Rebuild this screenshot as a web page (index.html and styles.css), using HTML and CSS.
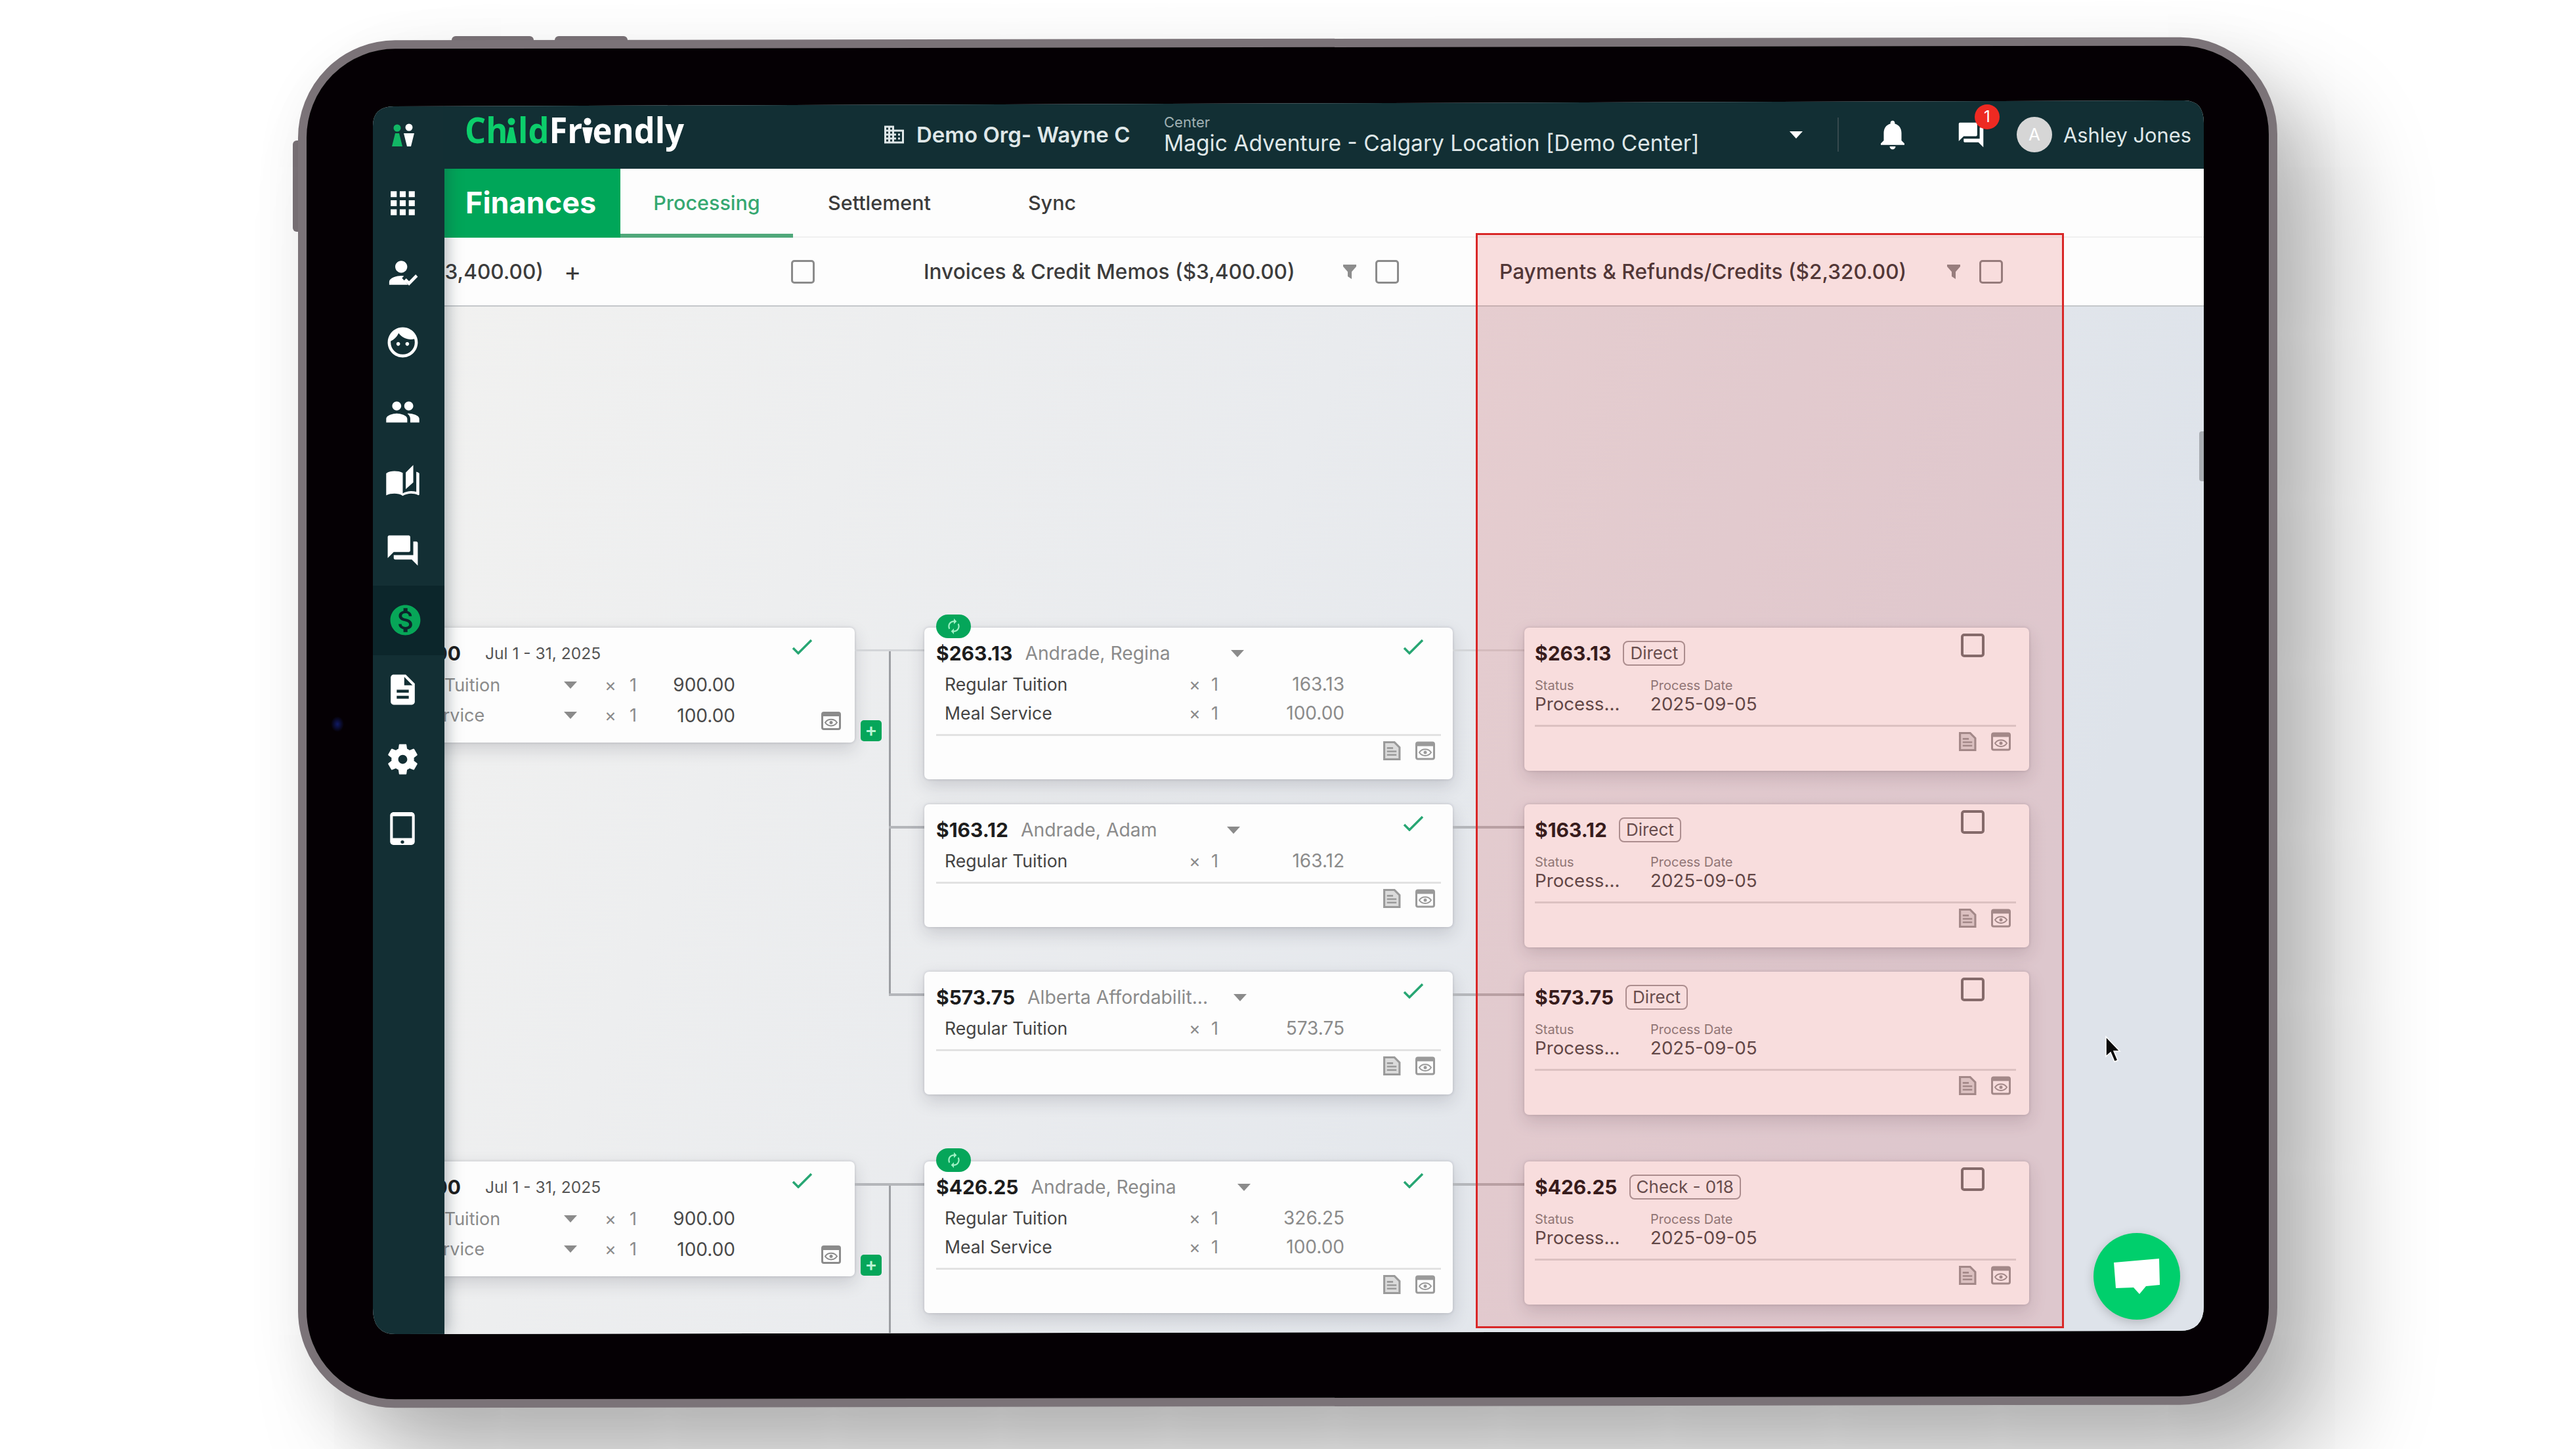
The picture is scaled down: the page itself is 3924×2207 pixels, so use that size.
FILE: index.html
```html
<!doctype html>
<html lang="en">
<head>
	<meta charset="utf-8">
	<title>ChildFriendly - Finances</title>
	<link rel="stylesheet" href="styles.css">
</head>
<body>

	<!--icons-->
	<svg class="sprite" width="0" height="0">
		<symbol id="i-apps" viewBox="0 0 24 24"><path d="M4 8h4V4H4v4zm6 12h4v-4h-4v4zm-6 0h4v-4H4v4zm0-6h4v-4H4v4zm6 0h4v-4h-4v4zm6-10v4h4V4h-4zm-6 4h4V4h-4v4zm6 6h4v-4h-4v4zm0 6h4v-4h-4v4z"/></symbol>
		<symbol id="i-reg" viewBox="0 0 24 24"><path d="M11 12c2.210 0 4-1.790 4-4s-1.790-4-4-4-4 1.790-4 4 1.790 4 4 4zM3 20v-2c0-2.670 5.300-4 8-4 .5 0 1.100.05 1.800.14L11.500 15.500 15.500 20zM16.200 20.500l-3.300-3.400 1.400-1.400 1.900 1.900 4.400-4.500 1.400 1.500z"/></symbol>
		<symbol id="i-face" viewBox="0 0 24 24"><path d="M9 11.750c-.69 0-1.250.56-1.250 1.250s.56 1.250 1.250 1.250 1.250-.56 1.250-1.250-.56-1.250-1.250-1.250zm6 0c-.69 0-1.250.56-1.250 1.250s.56 1.250 1.250 1.250 1.250-.56 1.250-1.250-.56-1.250-1.250-1.250zM12 2C6.480 2 2 6.480 2 12s4.480 10 10 10 10-4.480 10-10S17.520 2 12 2zm0 18c-4.410 0-8-3.590-8-8 0-.29.02-.58.05-.86 2.360-1.050 4.230-2.980 5.210-5.370C11.070 8.330 14.050 10 17.420 10c.78 0 1.530-.09 2.250-.26.21.71.33 1.470.33 2.260 0 4.410-3.590 8-8 8z"/></symbol>
		<symbol id="i-people" viewBox="0 0 24 24"><path d="M16 11c1.660 0 2.990-1.340 2.990-3S17.660 5 16 5c-1.660 0-3 1.340-3 3s1.340 3 3 3zm-8 0c1.660 0 2.990-1.340 2.990-3S9.660 5 8 5C6.340 5 5 6.340 5 8s1.340 3 3 3zm0 2c-2.330 0-7 1.170-7 3.500V19h14v-2.500c0-2.330-4.670-3.500-7-3.500zm8 0c-.29 0-.62.02-.97.05 1.160.84 1.970 1.970 1.970 3.450V19h6v-2.500c0-2.330-4.670-3.500-7-3.500z"/></symbol>
		<symbol id="i-book" viewBox="0 0 24 24"><path d="M19 1l-5 5v11l5-4.500V1zM12 6.200C10.500 5.300 8.300 5 6.500 5 4.600 5 2.500 5.400 1 6.500v14.700c1.500-.9 3.600-1.200 5.500-1.200s4 .4 5.500 1.500c1.400-.9 3.800-1.500 5.500-1.500 1.600 0 3.400.3 4.800 1 .3.100.7-.1.700-.5V6.500c-.6-.4-1.200-.8-2-1v13.300c-1.100-.3-2.300-.5-3.500-.5-1.700 0-4.100.6-5.500 1.500z"/></symbol>
		<symbol id="i-chat" viewBox="0 0 24 24"><path d="M21 6h-2v9H6v2c0 .55.45 1 1 1h11l4 4V7c0-.55-.45-1-1-1zm-4 6V3c0-.55-.45-1-1-1H3c-.55 0-1 .45-1 1v14l4-4h10c.55 0 1-.45 1-1z"/></symbol>
		<symbol id="i-money" viewBox="0 0 24 24"><path d="M12 2C6.480 2 2 6.480 2 12s4.480 10 10 10 10-4.480 10-10S17.520 2 12 2zm1.410 16.090V20h-2.670v-1.930c-1.710-.36-3.160-1.460-3.270-3.400h1.960c.1 1.050.82 1.870 2.650 1.870 1.960 0 2.400-.98 2.400-1.590 0-.83-.44-1.610-2.670-2.140-2.480-.6-4.180-1.620-4.180-3.670 0-1.720 1.390-2.840 3.110-3.210V4h2.670v1.950c1.860.45 2.790 1.860 2.850 3.390H14.300c-.05-1.110-.64-1.870-2.220-1.870-1.500 0-2.400.68-2.400 1.640 0 .84.65 1.390 2.670 1.910s4.180 1.390 4.180 3.910c-.01 1.830-1.380 2.830-3.120 3.160z"/></symbol>
		<symbol id="i-doc" viewBox="0 0 24 24"><path d="M14 2H6c-1.100 0-1.990.9-1.990 2L4 20c0 1.100.89 2 1.990 2H18c1.100 0 2-.9 2-2V8l-6-6zm2 16H8v-2h8v2zm0-4H8v-2h8v2zm-3-5V3.500L18.500 9H13z"/></symbol>
		<symbol id="i-gear" viewBox="0 0 24 24"><path d="M19.430 12.980c.04-.32.07-.64.07-.98s-.03-.66-.07-.98l2.110-1.650c.19-.15.24-.42.12-.64l-2-3.460c-.12-.22-.39-.3-.61-.22l-2.490 1c-.52-.4-1.080-.73-1.690-.98l-.38-2.650C14.460 2.180 14.250 2 14 2h-4c-.25 0-.46.18-.49.42l-.38 2.650c-.61.25-1.170.59-1.690.98l-2.490-1c-.23-.09-.49 0-.61.22l-2 3.460c-.13.22-.07.49.12.64l2.110 1.650c-.04.32-.07.65-.07.98s.03.66.07.98l-2.110 1.650c-.19.15-.24.42-.12.64l2 3.460c.12.22.39.3.61.22l2.490-1c.52.4 1.080.73 1.690.98l.38 2.650c.03.24.24.42.49.42h4c.25 0 .46-.18.49-.42l.38-2.650c.61-.25 1.170-.59 1.690-.98l2.490 1c.23.09.49 0 .61-.22l2-3.460c.12-.22.07-.49-.12-.64l-2.110-1.650zM12 15c-1.650 0-3-1.350-3-3s1.350-3 3-3 3 1.350 3 3-1.350 3-3 3z"/></symbol>
		<symbol id="i-tablet" viewBox="0 0 24 24"><path d="M18.500 0h-13C4.100 0 3 1.100 3 2.500v19C3 22.900 4.100 24 5.500 24h13c1.400 0 2.500-1.100 2.500-2.500v-19C21 1.100 19.900 0 18.500 0zM12 23c-.8 0-1.300-.5-1.300-1.200s.5-1.200 1.300-1.200 1.300.5 1.300 1.200S12.800 23 12 23zm7-4H5V3h14v16z"/></symbol>
		<symbol id="i-org" viewBox="0 0 24 24"><path d="M12 7V3H2v18h20V7H12zM6 19H4v-2h2v2zm0-4H4v-2h2v2zm0-4H4V9h2v2zm0-4H4V5h2v2zm4 12H8v-2h2v2zm0-4H8v-2h2v2zm0-4H8V9h2v2zm0-4H8V5h2v2zm10 12h-8v-2h2v-2h-2v-2h2v-2h-2V9h8v10zm-2-8h-2v2h2v-2zm0 4h-2v2h2v-2z"/></symbol>
		<symbol id="i-bell" viewBox="0 0 24 24"><path d="M12 22c1.100 0 2-.9 2-2h-4c0 1.100.9 2 2 2zm6-6v-5c0-3.070-1.640-5.640-4.500-6.320V4c0-.83-.67-1.500-1.500-1.500s-1.500.67-1.500 1.500v.68C7.630 5.360 6 7.920 6 11v5l-2 2v1h16v-1l-2-2z"/></symbol>
		<symbol id="i-filter" viewBox="0 0 20 22"><path d="M0 0h20v3l-7 8v11l-6-4v-7L0 3z"/></symbol>
		<symbol id="i-check" viewBox="0 0 32 24"><path d="M2 14l8 8L30 2" fill="none" stroke="#27a673" stroke-width="3.500"/></symbol>
		<symbol id="i-note" viewBox="0 0 28 28"><path d="M3 1.500h15l7.500 7.500v17.500H3z" fill="#0002" stroke="currentColor" stroke-width="3"/><path d="M7 10h9M7 15h14M7 20h14" stroke="currentColor" stroke-width="2.500"/></symbol>
		<symbol id="i-view" viewBox="0 0 30 28"><rect x="1.500" y="1.500" width="27" height="25" rx="2.500" fill="none" stroke="currentColor" stroke-width="3"/><path d="M2 4.500h26" stroke="currentColor" stroke-width="5"/><path d="M6 16.500c4-6.500 14-6.500 18 0-4 6.500-14 6.500-18 0z" fill="none" stroke="currentColor" stroke-width="2"/><circle cx="15" cy="16.500" r="2.500" fill="currentColor"/></symbol>
		<symbol id="i-sync" viewBox="0 0 24 24"><path d="M12 6v3l4-4-4-4v3c-4.420 0-8 3.580-8 8 0 1.570.46 3.030 1.240 4.260L6.700 14.800C6.250 13.970 6 13.010 6 12c0-3.310 2.690-6 6-6zm6.760 1.740L17.300 9.200c.44.84.7 1.790.7 2.800 0 3.310-2.690 6-6 6v-3l-4 4 4 4v-3c4.420 0 8-3.580 8-8 0-1.570-.46-3.030-1.240-4.260z"/></symbol>
	</svg>

	<!--tablet start-->
	<div class="tablet">
		<span class="key key-a"></span>
		<span class="key key-b"></span>
		<span class="key key-c"></span>
		<span class="case"></span>
		<span class="lens"></span>

		<div class="screen">
			<!--sidebar start-->
			<nav class="side">
				<div class="mark">
					<svg width="36" height="38" viewBox="0 0 36 38"><g fill="#12b765"><circle cx="9" cy="7" r="5.500"/><path d="M6 15h6l5 20H1z"/></g><g fill="#fff"><circle cx="27" cy="6" r="5.500"/><path d="M19 15h16l-5 20h-6z"/></g></svg>
				</div>
				<a class="item"><svg><use href="#i-apps"/></svg></a>
				<a class="item"><svg><use href="#i-reg"/></svg></a>
				<a class="item"><svg><use href="#i-face"/></svg></a>
				<a class="item"><svg><use href="#i-people"/></svg></a>
				<a class="item"><svg><use href="#i-book"/></svg></a>
				<a class="item"><svg><use href="#i-chat"/></svg></a>
				<a class="item on"><svg><use href="#i-money"/></svg></a>
				<a class="item"><svg><use href="#i-doc"/></svg></a>
				<a class="item"><svg><use href="#i-gear"/></svg></a>
				<a class="item"><svg><use href="#i-tablet"/></svg></a>
			</nav>
			<!--end sidebar-->

			<main class="main">
				<header class="top">
					<svg class="logo" width="340" height="70" viewBox="0 0 340 70">
						<text x="0" y="49" textLength="334" lengthAdjust="spacingAndGlyphs"><tspan fill="#0cce6b">Ch</tspan><tspan fill="none">i</tspan><tspan fill="#0cce6b">ld</tspan><tspan>Fr</tspan><tspan fill="none">i</tspan><tspan>endly</tspan></text>
						<g fill="#0cce6b"><circle cx="71" cy="16" r="5.500"/><path d="M68 25h6l5 24H63z"/></g>
						<g fill="#fff"><circle cx="187" cy="16" r="5.500"/><path d="M179 25h16l-5 24h-6z"/></g>
					</svg>
					<div class="org"><svg><use href="#i-org"/></svg><b>Demo Org- Wayne C</b></div>
					<div class="center">
						<div><small>Center</small><p>Magic Adventure - Calgary Location [Demo Center]</p></div>
						<i class="caret"></i>
					</div>
					<div class="tools">
						<svg class="bell"><use href="#i-bell"/></svg>
						<div class="msg"><svg><use href="#i-chat"/></svg><em>1</em></div>
						<span class="avatar">A</span>
						<span class="user">Ashley Jones</span>
					</div>
				</header>

				<div class="tabs">
					<h1>Finances</h1>
					<a class="tab on">Processing</a>
					<a class="tab">Settlement</a>
					<a class="tab">Sync</a>
				</div>

				<div class="heads">
					<div class="head h1c"><span class="cut">($3,400.00)</span><span class="add">+</span><i class="box"></i></div>
					<div class="head h2c"><span>Invoices &amp; Credit Memos ($3,400.00)</span><svg><use href="#i-filter"/></svg><i class="box"></i></div>
					<div class="head h3c"><span>Payments &amp; Refunds/Credits ($2,320.00)</span><svg><use href="#i-filter"/></svg><i class="box"></i></div>
				</div>

				<!--board start-->
				<div class="board">
					<!--row 1-->
					<div class="card charge">
						<div class="line"><b>$1,000.00</b><span class="date">Jul 1 - 31, 2025</span><svg class="tick"><use href="#i-check"/></svg></div>
						<div class="fee"><span>Regular Tuition</span><i class="caret"></i><s>×</s><u>1</u><em>900.00</em></div>
						<div class="fee"><span>Meal Service</span><i class="caret"></i><s>×</s><u>1</u><em>100.00</em></div>
						<svg class="view"><use href="#i-view"/></svg>
					</div>
					<div class="wire soft split"><span class="plus">+</span></div>
					<div class="card invoice">
						<span class="pill"><svg><use href="#i-sync"/></svg></span>
						<div class="line"><b>$263.13</b><span class="name">Andrade, Regina</span><i class="caret"></i><svg class="tick"><use href="#i-check"/></svg></div>
						<div class="fee"><span>Regular Tuition</span><s>×</s><u>1</u><em>163.13</em></div>
						<div class="fee"><span>Meal Service</span><s>×</s><u>1</u><em>100.00</em></div>
						<div class="foot"><svg><use href="#i-note"/></svg><svg><use href="#i-view"/></svg></div>
					</div>
					<div class="wire soft"></div>
					<div class="card pay">
						<div class="line"><b>$263.13</b><span class="chip">Direct</span><i class="box"></i></div>
						<dl><div><dt>Status</dt><dd>Process...</dd></div><div><dt>Process Date</dt><dd>2025-09-05</dd></div></dl>
						<div class="foot"><svg><use href="#i-note"/></svg><svg><use href="#i-view"/></svg></div>
					</div>

					<!--row 2-->
					<div class="wire branch split"></div>
					<div class="card invoice">
						<div class="line"><b>$163.12</b><span class="name">Andrade, Adam</span><i class="caret"></i><svg class="tick"><use href="#i-check"/></svg></div>
						<div class="fee"><span>Regular Tuition</span><s>×</s><u>1</u><em>163.12</em></div>
						<div class="foot"><svg><use href="#i-note"/></svg><svg><use href="#i-view"/></svg></div>
					</div>
					<div class="wire"></div>
					<div class="card pay">
						<div class="line"><b>$163.12</b><span class="chip">Direct</span><i class="box"></i></div>
						<dl><div><dt>Status</dt><dd>Process...</dd></div><div><dt>Process Date</dt><dd>2025-09-05</dd></div></dl>
						<div class="foot"><svg><use href="#i-note"/></svg><svg><use href="#i-view"/></svg></div>
					</div>

					<!--row 3-->
					<div class="wire branch"></div>
					<div class="card invoice">
						<div class="line"><b>$573.75</b><span class="name">Alberta Affordabilit...</span><i class="caret"></i><svg class="tick"><use href="#i-check"/></svg></div>
						<div class="fee"><span>Regular Tuition</span><s>×</s><u>1</u><em>573.75</em></div>
						<div class="foot"><svg><use href="#i-note"/></svg><svg><use href="#i-view"/></svg></div>
					</div>
					<div class="wire"></div>
					<div class="card pay">
						<div class="line"><b>$573.75</b><span class="chip">Direct</span><i class="box"></i></div>
						<dl><div><dt>Status</dt><dd>Process...</dd></div><div><dt>Process Date</dt><dd>2025-09-05</dd></div></dl>
						<div class="foot"><svg><use href="#i-note"/></svg><svg><use href="#i-view"/></svg></div>
					</div>

					<!--row 4-->
					<div class="card charge">
						<div class="line"><b>$1,000.00</b><span class="date">Jul 1 - 31, 2025</span><svg class="tick"><use href="#i-check"/></svg></div>
						<div class="fee"><span>Regular Tuition</span><i class="caret"></i><s>×</s><u>1</u><em>900.00</em></div>
						<div class="fee"><span>Meal Service</span><i class="caret"></i><s>×</s><u>1</u><em>100.00</em></div>
						<svg class="view"><use href="#i-view"/></svg>
					</div>
					<div class="wire split"><span class="plus">+</span></div>
					<div class="card invoice">
						<span class="pill"><svg><use href="#i-sync"/></svg></span>
						<div class="line"><b>$426.25</b><span class="name">Andrade, Regina</span><i class="caret"></i><svg class="tick"><use href="#i-check"/></svg></div>
						<div class="fee"><span>Regular Tuition</span><s>×</s><u>1</u><em>326.25</em></div>
						<div class="fee"><span>Meal Service</span><s>×</s><u>1</u><em>100.00</em></div>
						<div class="foot"><svg><use href="#i-note"/></svg><svg><use href="#i-view"/></svg></div>
					</div>
					<div class="wire"></div>
					<div class="card pay">
						<div class="line"><b>$426.25</b><span class="chip">Check - 018</span><i class="box"></i></div>
						<dl><div><dt>Status</dt><dd>Process...</dd></div><div><dt>Process Date</dt><dd>2025-09-05</dd></div></dl>
						<div class="foot"><svg><use href="#i-note"/></svg><svg><use href="#i-view"/></svg></div>
					</div>
				</div>
				<!--end board-->
			</main>

			<span class="thumb"></span>
			<svg class="cursor" width="26" height="42" viewBox="0 0 26 42"><path d="M2 2v30l7-6 6 14 5-2-6-14h9z" fill="#0a0a0a" stroke="#fff" stroke-width="1.500"/></svg>
			<button class="help"><svg width="72" height="56" viewBox="0 0 72 56"><path d="M1 7l69-6 1 40-21 2-10 12-9-10-27 1z" fill="#fff"/></svg></button>
			<div class="mark-area"></div>
		</div>
	</div>
	<!--end tablet-->

</body>
</html>
```
FILE: styles.css
```css
*{margin:0;padding:0;box-sizing:border-box;}
html,body{width:3924px;height:2207px;overflow:hidden;}
body{background:#fff;font-family:Inter,"Liberation Sans",sans-serif;color:#3c3c3c;padding:59px 0 0 454px;}
svg{display:block;fill:currentColor;flex:none;}
i,em{font-style:normal;}
s,u{text-decoration:none;}
.sprite{position:absolute;}

/*tablet start*/
.tablet{position:relative;width:3015px;height:2083px;padding:94px 0 0 114px;}
.case{position:absolute;inset:0;background:#050004;border:13px solid #7b7378;border-radius:148px;transform:skewY(-.1deg);box-shadow:90px 100px 150px rgba(0,0,0,.25),20px 30px 90px rgba(0,0,0,.1);}
.key{position:absolute;background:#7b7378;border-radius:6px;}
.key-a{left:234px;top:-4px;width:125px;height:20px;}
.key-b{left:391px;top:-4px;width:111px;height:20px;}
.key-c{left:-8px;top:155px;width:20px;height:139px;}
.lens{position:absolute;left:50px;top:1032px;width:20px;height:24px;border-radius:50%;background:radial-gradient(#101a66,#050004 70%);}
.screen{position:relative;width:2789px;height:1879px;display:flex;overflow:hidden;background:#e6e9ee;clip-path:path("M0 39Q0 9 32 9L2759 0Q2789 0 2789 34L2789 1836Q2789 1874 2752 1874L34 1879Q0 1879 0 1840Z");}

/*sidebar*/
.side{position:relative;z-index:3;width:109px;background:#132f34;color:#fff;box-shadow:4px 0 22px rgba(30,50,60,.35);}
.side .mark{height:104px;display:flex;align-items:center;padding:4px 0 0 28px;}
.side .item{height:105.8px;display:flex;align-items:center;justify-content:center;padding-right:19px;}
.side .item svg{width:55px;height:55px;}
.side .item:last-child svg{width:50px;height:54px;}
.side .on{background:#0c262b;color:#07a658;padding-right:11px;}

/*header*/
.main{width:2680px;display:flex;flex-direction:column;}
.top{position:relative;z-index:4;height:104px;background:#122f34;color:#dfe7e8;display:flex;align-items:center;margin-left:-2px;}
.logo{margin:-3px 0 0 33px;}
.logo text{font:700 54px "Open Sans",sans-serif;fill:#fff;}
.org{display:flex;align-items:center;margin-left:296px;width:429px;font-size:33px;white-space:nowrap;}
.org svg{width:36px;height:36px;margin-right:16px;}
.org b{font-weight:600;}
.center{display:flex;align-items:center;width:1028px;border-right:2px solid #35494d;height:52px;}
.center div{width:953px;white-space:nowrap;}
.center small{display:block;font-size:22px;line-height:26px;color:#9fb0b2;margin-top:-1px;}
.center p{font-size:33.5px;line-height:38px;}
.caret{display:block;width:0;height:0;border:10px solid transparent;border-top:11px solid currentColor;border-bottom:0;flex:none;}
.tools{display:flex;align-items:center;color:#fff;}
.bell{width:54px;height:54px;margin-left:55px;}
.msg{position:relative;margin-left:70px;}
.msg svg{width:45px;height:45px;}
.msg em{position:absolute;left:28px;top:-24px;width:38px;height:38px;border-radius:50%;background:#ee2a22;font-size:24px;line-height:38px;text-align:center;}
.avatar{width:54px;height:54px;border-radius:50%;background:#d6d6d6;margin-left:47px;font-size:26px;line-height:54px;text-align:center;}
.user{font-size:30.8px;margin-left:17px;color:#dfe7e8;white-space:nowrap;}

.tabs{height:105px;background:#fdfdfd;display:flex;border-bottom:2px solid #f0f0f0;}
.tabs h1{width:268px;height:105px;background:#00a659;color:#fff;font-size:45px;line-height:103px;font-weight:700;padding-left:32px;}
.tab{width:263px;height:105px;line-height:103px;text-align:center;font-size:30.5px;font-weight:500;}
.tab.on{color:#36a871;border-bottom:6px solid #4fa87a;}

.heads{position:relative;z-index:2;height:105px;background:#fdfdfd;border-bottom:2px solid #c4c7ca;display:flex;}
.head{display:flex;align-items:center;font-size:31.6px;font-weight:500;white-space:nowrap;}
.head svg{width:20px;height:22px;color:#8d8d8d;}
.head .box{margin-left:29px;}
.h1c{width:730px;}
.h1c .cut{width:151px;display:flex;justify-content:flex-end;}
.h1c .add{font-size:40px;margin-left:31px;width:25px;font-weight:400;}
.h1c .box{margin-left:321px;}
.h2c{width:877px;}
.h2c span{width:639px;}
.h3c span{width:682px;}
.box{display:block;width:36px;height:36px;border:3px solid #8b8b8b;border-radius:5px;}

/*board start*/
.board{flex:1;display:grid;grid-template-columns:625px 106px 805px 109px 769px;grid-template-rows:269px 255px 289px 263px;align-items:start;padding-top:489px;background:linear-gradient(112deg,#f1f1f0,#e9ebee 42%,#dee3ea 85%);overflow:hidden;}
.card{position:relative;background:#fdfdfd;border-radius:7px;box-shadow:0 10px 26px rgba(40,40,60,.17),0 0 4px rgba(40,40,60,.2);}
.line{height:64px;padding-top:14px;display:flex;align-items:center;white-space:nowrap;}
.line b{font-size:30px;font-weight:700;color:#1d1d1d;}
.fee{height:44px;display:flex;align-items:center;font-size:27px;white-space:nowrap;}
.fee span{font-size:26.6px;}
.fee em{font-size:28px;}
.fee s,.fee u{color:#8b8b8b;}
.fee s{width:32px;}
.caret{color:#8b8b8b;}
.top .caret{color:#fff;}
.tick{width:32px;height:24px;}

.charge{grid-column:1;height:175px;margin-left:-131px;padding-left:18px;}
.charge .line b{width:138px;display:flex;justify-content:flex-end;}
.charge .date{font-size:24.6px;margin-left:37px;width:467px;color:#555;}
.charge .tick{margin-top:-20px;}
.charge .fee{height:46.5px;padding-left:8px;color:#8b8b8b;}
.charge .fee span{width:287px;font-size:27px;}
.charge .fee s{margin-left:42px;width:38px;}
.charge .fee u{width:20px;}
.charge .fee em{width:141px;text-align:right;color:#4a4a4a;}
.view{position:absolute;right:21px;bottom:19px;width:30px;height:28px;color:#8b8b8b;}

.invoice{grid-column:3;padding:0 18px;}
.name{font-size:28.3px;color:#8b8b8b;width:314px;margin-left:19px;}
.invoice .tick{margin:-20px 26px 0 auto;}
.invoice .fee{padding-left:13px;}
.invoice .fee span{width:372px;color:#444;}
.invoice .fee s{width:34px;}
.invoice .fee u{width:20px;}
.invoice .fee em{width:183px;text-align:right;color:#8b8b8b;}
.foot{height:69px;margin-top:10px;border-top:3px solid #e2e2e2;display:flex;justify-content:flex-end;gap:21px;padding:8px 9px 0 0;color:#9a9a9a;}
.foot svg{width:30px;height:29px;}
.pill{position:absolute;left:18px;top:-20px;width:53px;height:36px;border-radius:18px;background:#05a65a;color:#9ff0c4;display:flex;align-items:center;justify-content:center;}
.pill svg{width:26px;height:26px;}

.pay{grid-column:5;padding:0 20px 0 16px;height:218px;}
.chip{font-size:26px;line-height:34px;border:2px solid #a5a0a1;border-radius:8px;padding:0 9px;margin-left:18px;color:#555;}
.pay .box{margin:-24px 48px 0 auto;border-color:#777;border-width:4px;}
.pay dl{display:flex;height:78px;padding-top:11px;white-space:nowrap;}
.pay dl div{width:176px;}
.pay dt{font-size:20px;line-height:26px;color:#858585;}
.pay dd{font-size:27.7px;line-height:31px;color:#4f4f4f;}
.pay .foot{margin-top:6px;padding-right:8px;border-color:#dcdcdc;}

/*wires between cards*/
.wire{align-self:stretch;position:relative;margin-top:33px;border-top:4px solid #b4b6ba;}
.wire.soft{border-color:#d3d5d8;border-top-width:3px;}
.wire.branch{grid-column:2;margin-left:52px;}
.wire.split:before{content:"";position:absolute;left:52px;top:0;bottom:-36px;width:3px;background:#9d9fa3;}
.wire.branch.split:before{left:0;}
.plus{position:absolute;left:9px;top:105px;width:32px;height:32px;border-radius:5px;background:#05a65a;color:#b9f5d4;font-size:28px;font-weight:600;line-height:31px;text-align:center;}
/*end board*/

.thumb{position:absolute;right:0;top:504px;width:7px;height:76px;border-radius:4px 0 0 4px;background:#a9adb3;z-index:5;}
.cursor{position:absolute;left:2638px;top:1424px;}
.help{position:absolute;left:2621px;top:1725px;width:132px;height:132px;border:0;border-radius:50%;background:#00cf6c;display:flex;align-items:center;justify-content:center;box-shadow:0 4px 16px rgba(0,0,0,.2);}
.mark-area{position:absolute;z-index:6;left:1680px;top:202px;width:896px;height:1668px;border:3px solid #d92727;background:rgba(220,30,30,.14);}
```
